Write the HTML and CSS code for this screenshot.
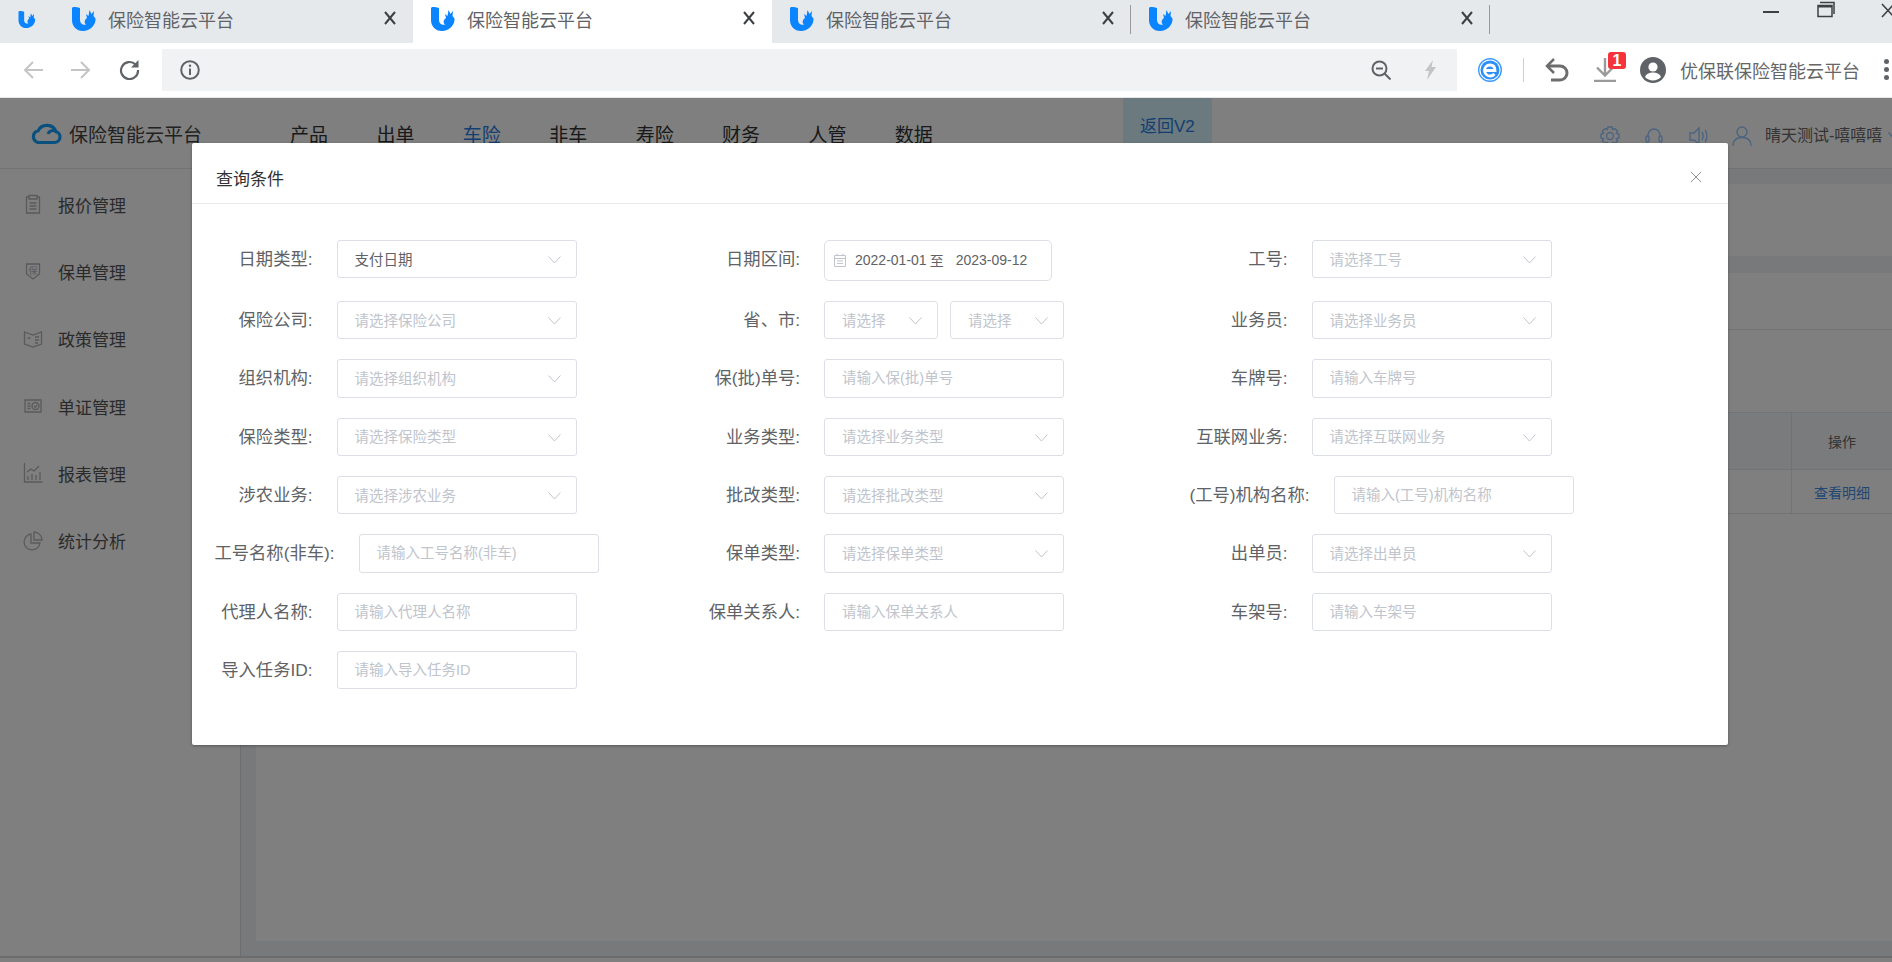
FILE: index.html
```html
<!DOCTYPE html>
<html>
<head>
    <title>保险智能云平台</title>
    <link rel="stylesheet" href="styles.css">
</head>
<body>
    <svg class="defs" width="0" height="0">
        <symbol id="logo" viewBox="0 0 24 24">
            <path d="M1 0C4 0 7 .5 8 1V13C8 16.5 11 18.500 14 17.500 11.500 15.500 13 12 15 11L14 7 16.500 9 17.500 3 19.500 7 22 4 21.500 9 23.500 11.500C24 18 18 24 11 24 4 24 0 19 0 13V1Z"/>
        </symbol>
        <symbol id="chevron" viewBox="0 0 13 8">
            <path d="M.5.5l6 6.500 6-6.500" fill="none" stroke="currentColor"/>
        </symbol>
        <symbol id="close" viewBox="0 0 12 14">
            <path d="M1 1l10 12M11 1L1 13" fill="none" stroke="currentColor" stroke-width="2"/>
        </symbol>
    </svg>

    <div class="tabs">
        <div class="pinned"><svg class="logo-small"><use href="#logo"/></svg></div>
        <div class="tab">
            <svg class="tab-logo"><use href="#logo"/></svg>
            <span class="tab-title">保险智能云平台</span>
            <svg class="tab-close"><use href="#close"/></svg>
        </div>
        <div class="tab active">
            <svg class="tab-logo"><use href="#logo"/></svg>
            <span class="tab-title">保险智能云平台</span>
            <svg class="tab-close"><use href="#close"/></svg>
        </div>
        <div class="tab">
            <svg class="tab-logo"><use href="#logo"/></svg>
            <span class="tab-title">保险智能云平台</span>
            <svg class="tab-close closer"><use href="#close"/></svg>
            <i class="tab-sep"></i>
        </div>
        <div class="tab">
            <svg class="tab-logo"><use href="#logo"/></svg>
            <span class="tab-title">保险智能云平台</span>
            <svg class="tab-close closer"><use href="#close"/></svg>
            <i class="tab-sep"></i>
        </div>
        <div class="win-btns">
            <svg class="win-min" width="16" height="18" viewBox="0 0 16 18"><path d="M0 12h16" stroke="#3c4043" stroke-width="2"/></svg>
            <svg class="win-max" width="18" height="18" viewBox="0 0 18 18"><path d="M3 2.500h14V14M1 5.500h14v11H1z" fill="none" stroke="#3c4043" stroke-width="1.500"/><path d="M1 6.500h14" stroke="#3c4043" stroke-width="2"/></svg>
            <svg class="win-close" width="14" height="18" viewBox="0 0 14 18"><path d="M1 4l12 13M13 4L1 17" fill="none" stroke="#3c4043" stroke-width="1.600"/></svg>
        </div>
    </div>

    <div class="toolbar">
        <svg class="tool-btn" width="20" height="20" viewBox="0 0 20 20"><path d="M20 10H2M10 2l-8 8 8 8" fill="none" stroke="#c4c4c4" stroke-width="2"/></svg>
        <svg class="tool-btn next" width="20" height="20" viewBox="0 0 20 20"><path d="M0 10h18M10 2l8 8-8 8" fill="none" stroke="#c4c4c4" stroke-width="2"/></svg>
        <svg class="tool-btn next" width="21" height="21" viewBox="0 0 21 21"><path d="M16.500 5.500A8.500 8.500 0 1 0 19 11" fill="none" stroke="#5f6368" stroke-width="2.200"/><path d="M19.500 1v7.500H12z" fill="#5f6368"/></svg>
        <div class="address">
            <svg width="20" height="20" viewBox="0 0 20 20"><circle cx="10" cy="10" r="8.800" fill="none" stroke="#5f6368" stroke-width="2"/><path d="M10 8.500V15" stroke="#5f6368" stroke-width="2"/><circle cx="10" cy="5.800" r="1.200" fill="#5f6368"/></svg>
            <svg class="zoom-icon" width="20" height="20" viewBox="0 0 20 20"><circle cx="8.500" cy="8.500" r="7" fill="none" stroke="#5f6368" stroke-width="2"/><path d="M5 8.500h7M13.500 13.500L19.500 19.500" stroke="#5f6368" stroke-width="2"/></svg>
            <svg class="bolt-icon" width="14" height="20" viewBox="0 0 14 20"><path d="M10 0L2 11h4L4 20l9-13H8.500z" fill="#c4c4c4"/></svg>
        </div>
        <svg class="edge-icon" width="24" height="24" viewBox="0 0 24 24">
            <circle cx="12" cy="12" r="11.300" fill="none" stroke="#3d9bff" stroke-width="1.400"/>
            <circle cx="12" cy="12" r="9.500" fill="#2d8ff5"/>
            <path d="M6 12.500h11C17 8.500 14.500 7 12 7 8.500 7 6.500 9.500 6.500 12.500S9 18 12 18c2 0 3.500-.8 4.500-2" fill="none" stroke="#fff" stroke-width="2.800"/>
        </svg>
        <i class="tool-sep"></i>
        <svg class="undo-icon" width="24" height="24" viewBox="0 0 24 24"><path d="M2 8h13a7 7 0 0 1 0 14H6" fill="none" stroke="#6d6d6d" stroke-width="3"/><path d="M9 1L2 8l7 7" fill="none" stroke="#6d6d6d" stroke-width="2.500"/></svg>
        <div class="download">
            <svg width="22" height="24" viewBox="0 0 22 24"><path d="M11 0v17M3 9.500l8 8 8-8M0 23h22" fill="none" stroke="#9a9a9a" stroke-width="2.400"/></svg>
            <span class="badge">1</span>
        </div>
        <svg class="avatar" width="26" height="26" viewBox="0 0 26 26"><circle cx="13" cy="13" r="13" fill="#5f6368"/><circle cx="13" cy="10" r="4.600" fill="#fff"/><path d="M5 20c1.500-3.500 5-4.500 8-4.500s6.500 1 8 4.500c-2 2.300-5 3.500-8 3.500s-6-1.200-8-3.500z" fill="#fff"/></svg>
        <span class="profile">优保联保险智能云平台</span>
        <div class="menu-dots"><i></i><i></i><i></i></div>
    </div>

    <div class="page">
        <div class="app-header">
            <svg class="cloud" width="32" height="24" viewBox="0 0 32 24"><path d="M8 21.500h16.500a5.500 5.500 0 0 0 1.500-10.800A9.500 9 0 0 0 8.200 9.800 6 6 0 0 0 8 21.500zM18 13a5 5 0 0 1 8-2.300" fill="none" stroke="#14a0ff" stroke-width="3.200"/></svg>
            <span class="app-title">保险智能云平台</span>
            <div class="nav">
                <a>产品</a><a>出单</a><a class="current">车险</a><a>非车</a><a>寿险</a><a>财务</a><a>人管</a><a>数据</a>
            </div>
            <div class="back-v2">返回V2</div>
            <div class="user-area">
                <svg width="20" height="20" viewBox="0 0 20 20"><path d="M8 1h4l.6 2.500 2.300-1 2.700 2.700-1.200 2.200 2.600.7v3.800l-2.600.7 1.200 2.200-2.700 2.700-2.300-1L12 19H8l-.6-2.500-2.300 1-2.700-2.700 1.200-2.200L1 11.900V8.100l2.600-.7-1.200-2.200 2.700-2.700 2.300 1z" fill="none"/><circle cx="10" cy="10" r="3.500" fill="none"/></svg>
                <svg width="20" height="20" viewBox="0 0 20 20"><path d="M4 11V9a6 6 0 0 1 12 0v2" fill="none"/><rect x="2" y="10" width="3" height="6" rx="1.500" fill="none"/><rect x="15" y="10" width="3" height="6" rx="1.500" fill="none"/></svg>
                <svg width="20" height="20" viewBox="0 0 20 20"><path d="M2 7h4l5-5v16l-5-4H2zM14 6c1.500 2 1.500 6 0 8M17 4c2.500 3 2.500 9 0 12" fill="none"/></svg>
                <svg width="20" height="20" viewBox="0 0 20 20"><circle cx="10" cy="6" r="5" fill="none"/><path d="M1 20c0-6 4-8.500 9-8.500s9 2.500 9 8.500" fill="none"/></svg>
                <span class="user-name">晴天测试-嘻嘻嘻</span>
                <svg class="user-caret"><use href="#chevron"/></svg>
            </div>
        </div>

        <div class="app-body">
            <div class="sidebar">
                <div class="side-item">
                    <svg width="20" height="20" viewBox="0 0 20 20"><path d="M6 3H3.500v16h13V3H14M6 1.500h8V5H6zM6.500 9h7M6.500 12h7M6.500 15h7" fill="none"/></svg>
                    <span>报价管理</span>
                </div>
                <div class="side-item">
                    <svg width="20" height="20" viewBox="0 0 20 20"><path d="M3.500 3h13v10L10 18l-6.500-5z" fill="none"/><text x="10" y="12.500" class="shield-text">保</text></svg>
                    <span>保单管理</span>
                </div>
                <div class="side-item">
                    <svg width="20" height="20" viewBox="0 0 20 20"><path d="M1.500 3L10 6l8.500-3v12L10 18l-8.500-3zM12 8h4M12 11h4M12 14h3M4.500 9h3" fill="none"/></svg>
                    <span>政策管理</span>
                </div>
                <div class="side-item">
                    <svg width="20" height="20" viewBox="0 0 20 20"><path d="M2 4h16v12H2zM4.500 7.500h3M4.500 10h3M4.500 12.500h3" fill="none"/><circle cx="12.500" cy="10" r="3.500" fill="none"/><path d="M11 10l1.200 1.300 2-2.400" fill="none"/></svg>
                    <span>单证管理</span>
                </div>
                <div class="side-item">
                    <svg width="20" height="20" viewBox="0 0 20 20"><path d="M1.500 0v19h18M5 17v-4M9 17v-6M13 17v-5M17 17V9M4 9l4-3 3 2 5-5" fill="none"/></svg>
                    <span>报表管理</span>
                </div>
                <div class="side-item">
                    <svg width="20" height="20" viewBox="0 0 20 20"><path d="M8 3a8 8 0 1 0 9 9H8zM11 1v8h8a8 8 0 0 0-8-8z" fill="none"/></svg>
                    <span>统计分析</span>
                </div>
            </div>

            <div class="main">
                <div class="card-top"></div>
                <div class="card-list">
                    <div class="card-tools"><div class="tools-line"></div></div>
                    <div class="table-row head"><div class="cell-op">操作</div></div>
                    <div class="table-row"><div class="cell-op link">查看明细</div></div>
                </div>
            </div>
        </div>
        <div class="app-footer"></div>

        <div class="overlay">
            <div class="modal">
                <div class="modal-header">
                    <span class="modal-title">查询条件</span>
                    <svg class="modal-close" width="12" height="12" viewBox="0 0 12 12"><path d="M1 1l10 10M11 1L1 11" stroke="#909399"/></svg>
                </div>
                <form class="query-form">
                    <div class="field">
                        <label>日期类型:</label>
                        <div class="select value">支付日期<svg><use href="#chevron"/></svg></div>
                    </div>
                    <div class="field">
                        <label>日期区间:</label>
                        <div class="date-range">
                            <svg width="14" height="14" viewBox="0 0 14 14"><path d="M1.500 2.500h11v11h-11zM1.500 5.500h11M4 2.500v-2M10 2.500v-2M4 8h6M4 10.500h6" fill="none" stroke="#c0c4cc"/></svg>
                            <span class="date-from">2022-01-01</span><span class="date-to">至</span><span class="date-end">2023-09-12</span>
                        </div>
                    </div>
                    <div class="field">
                        <label>工号:</label>
                        <div class="select">请选择工号<svg><use href="#chevron"/></svg></div>
                    </div>

                    <div class="field">
                        <label>保险公司:</label>
                        <div class="select">请选择保险公司<svg><use href="#chevron"/></svg></div>
                    </div>
                    <div class="field">
                        <label>省、市:</label>
                        <div class="select-pair">
                            <div class="select">请选择<svg><use href="#chevron"/></svg></div>
                            <div class="select">请选择<svg><use href="#chevron"/></svg></div>
                        </div>
                    </div>
                    <div class="field">
                        <label>业务员:</label>
                        <div class="select">请选择业务员<svg><use href="#chevron"/></svg></div>
                    </div>

                    <div class="field">
                        <label>组织机构:</label>
                        <div class="select">请选择组织机构<svg><use href="#chevron"/></svg></div>
                    </div>
                    <div class="field">
                        <label>保(批)单号:</label>
                        <input type="text" placeholder="请输入保(批)单号">
                    </div>
                    <div class="field">
                        <label>车牌号:</label>
                        <input type="text" placeholder="请输入车牌号">
                    </div>

                    <div class="field">
                        <label>保险类型:</label>
                        <div class="select">请选择保险类型<svg><use href="#chevron"/></svg></div>
                    </div>
                    <div class="field">
                        <label>业务类型:</label>
                        <div class="select">请选择业务类型<svg><use href="#chevron"/></svg></div>
                    </div>
                    <div class="field">
                        <label>互联网业务:</label>
                        <div class="select">请选择互联网业务<svg><use href="#chevron"/></svg></div>
                    </div>

                    <div class="field">
                        <label>涉农业务:</label>
                        <div class="select">请选择涉农业务<svg><use href="#chevron"/></svg></div>
                    </div>
                    <div class="field">
                        <label>批改类型:</label>
                        <div class="select">请选择批改类型<svg><use href="#chevron"/></svg></div>
                    </div>
                    <div class="field">
                        <label>(工号)机构名称:</label>
                        <input type="text" placeholder="请输入(工号)机构名称">
                    </div>

                    <div class="field">
                        <label>工号名称(非车):</label>
                        <input type="text" placeholder="请输入工号名称(非车)">
                    </div>
                    <div class="field">
                        <label>保单类型:</label>
                        <div class="select">请选择保单类型<svg><use href="#chevron"/></svg></div>
                    </div>
                    <div class="field">
                        <label>出单员:</label>
                        <div class="select">请选择出单员<svg><use href="#chevron"/></svg></div>
                    </div>

                    <div class="field">
                        <label>代理人名称:</label>
                        <input type="text" placeholder="请输入代理人名称">
                    </div>
                    <div class="field">
                        <label>保单关系人:</label>
                        <input type="text" placeholder="请输入保单关系人">
                    </div>
                    <div class="field">
                        <label>车架号:</label>
                        <input type="text" placeholder="请输入车架号">
                    </div>

                    <div class="field">
                        <label>导入任务ID:</label>
                        <input type="text" placeholder="请输入导入任务ID">
                    </div>
                </form>
            </div>
        </div>
    </div>
</body>
</html>
```

FILE: styles.css
```css
* {
    box-sizing: border-box;
}
html, body {
    height: 100%;
}
body {
    margin: 0;
    display: flex;
    flex-direction: column;
    overflow: hidden;
    font-family: "Liberation Sans", "Noto Sans CJK SC", sans-serif;
    background-color: white;
}
.defs {
    position: absolute;
}

/* browser tab strip */
.tabs {
    display: flex;
    height: 43px;
    flex: none;
    background-color: #e6e9ec;
    overflow: hidden;
}
.pinned {
    flex: none;
    width: 54px;
    padding: 11px 0 0 18px;
}
.logo-small {
    display: block;
    width: 18px;
    height: 17px;
    fill: #0a84ff;
}
.tab {
    display: flex;
    align-items: center;
    flex: none;
    width: 359px;
    padding-left: 18px;
    color: #5f6368;
}
.tab.active {
    background-color: white;
}
.tab-logo {
    width: 24px;
    height: 24px;
    margin-top: -5px;
    fill: #0a84ff;
}
.tab-title {
    margin: -5px 0 0 12px;
    font-size: 18px;
}
.tab-close {
    width: 12px;
    height: 14px;
    margin: -7px 17px 0 auto;
    color: #3c4043;
}
.tab-close.closer {
    margin-right: 16px;
}
.tab-sep {
    width: 1px;
    height: 29px;
    margin-top: -5px;
    background-color: #9a9a9a;
}
.win-btns {
    display: flex;
    flex: none;
    align-items: flex-start;
    margin-left: 273px;
}
.win-max {
    margin-left: 38px;
}
.win-close {
    margin-left: 46px;
}

/* browser toolbar */
.toolbar {
    display: flex;
    align-items: center;
    flex: none;
    height: 55px;
    padding: 0 0 1px 23px;
    background-color: white;
    border-bottom: 1px solid #e3e5e8;
}
.tool-btn.next {
    margin-left: 28px;
}
.address {
    display: flex;
    align-items: center;
    width: 1295px;
    height: 42px;
    margin-left: 22px;
    padding: 0 20px 0 18px;
    background-color: #f1f2f4;
}
.zoom-icon {
    margin-left: auto;
}
.bolt-icon {
    margin-left: 32px;
}
.edge-icon {
    margin-left: 21px;
}
.tool-sep {
    width: 1px;
    height: 24px;
    margin-left: 21px;
    background-color: #cfcfcf;
}
.undo-icon {
    margin-left: 21px;
}
.download {
    position: relative;
    width: 22px;
    height: 24px;
    margin-left: 25px;
}
.download svg {
    display: block;
}
.badge {
    position: absolute;
    top: -6px;
    left: 14px;
    width: 18px;
    height: 17px;
    border-radius: 3px;
    background-color: #f4333c;
    color: white;
    font-size: 16px;
    font-weight: bold;
    line-height: 17px;
    text-align: center;
}
.avatar {
    margin-left: 24px;
}
.profile {
    margin-left: 14px;
    color: #666;
    font-size: 18px;
}
.menu-dots {
    display: flex;
    flex-direction: column;
    gap: 3px;
    margin-left: 24px;
}
.menu-dots i {
    width: 5px;
    height: 5px;
    border-radius: 50%;
    background-color: #5f6368;
}

/* the application behind the dialog */
.page {
    position: relative;
    display: flex;
    flex-direction: column;
    flex: 1;
    min-height: 0;
    background-color: white;
}
.app-header {
    display: flex;
    align-items: center;
    flex: none;
    height: 71px;
    padding-left: 30px;
    border-bottom: 1px solid #e4e4e4;
    overflow: hidden;
}
.cloud {
    flex: none;
}
.app-title {
    flex: none;
    margin-left: 7px;
    color: #444;
    font-size: 19px;
    white-space: nowrap;
}
.nav {
    display: flex;
    flex: none;
    gap: 48.400px;
    margin-left: 88px;
    font-size: 19px;
    color: #333;
    white-space: nowrap;
}
.nav .current {
    color: #2b7de0;
}
.back-v2 {
    flex: none;
    align-self: flex-start;
    width: 89px;
    height: 58px;
    margin-left: 190px;
    background-color: #d4f4ff;
    color: #2b7de0;
    font-size: 17px;
    line-height: 58px;
    text-align: center;
}
.user-area {
    display: flex;
    align-items: center;
    flex: none;
    gap: 24px;
    margin: 5px 0 0 388px;
}
.user-area svg {
    flex: none;
    stroke: #98c8ff;
    stroke-width: 1.400;
}
.user-name {
    margin: 0 0 3px -11px;
    color: #666;
    font-size: 16px;
    white-space: nowrap;
}
.user-area .user-caret {
    width: 13px;
    height: 8px;
    margin-left: -18px;
    color: #98c8ff;
}
.app-body {
    display: flex;
    flex: 1;
    min-height: 0;
}
.sidebar {
    flex: none;
    width: 241px;
    padding-top: 1.500px;
    border-right: 1px solid #ddd;
}
.side-item {
    display: flex;
    align-items: center;
    height: 67.300px;
    padding-left: 23px;
    color: #555;
    font-size: 17px;
}
.side-item svg {
    flex: none;
    stroke: #b4b4b4;
    stroke-width: 1.300;
}
.side-item span {
    margin-left: 15px;
}
.shield-text {
    fill: #b4b4b4;
    stroke: none;
    font-size: 9px;
    text-anchor: middle;
}
.main {
    display: flex;
    flex-direction: column;
    flex: 1;
    min-width: 0;
    padding: 15px 0 15px 15px;
    background-color: #f0f2f5;
}
.card-top {
    flex: none;
    height: 72px;
    margin-bottom: 17px;
    background-color: white;
}
.card-list {
    flex: 1;
    background-color: white;
}
.card-tools {
    height: 139px;
}
.tools-line {
    height: 57px;
    border-bottom: 1px solid #e4e4e4;
}
.table-row {
    display: flex;
    justify-content: flex-end;
    height: 44px;
    border-bottom: 1px solid #e4e7ed;
}
.table-row.head {
    height: 58px;
    background-color: #f5f6f8;
    border-top: 1px solid #e4e7ed;
}
.cell-op {
    display: flex;
    align-items: center;
    justify-content: center;
    width: 101px;
    border-left: 1px solid #e4e7ed;
    color: #666;
    font-size: 14px;
}
.cell-op.link {
    color: #3f8fe8;
}
.app-footer {
    flex: none;
    height: 6px;
    border-top: 2px solid #d8d8d8;
}

/* dialog */
.overlay {
    position: absolute;
    top: 0;
    left: 0;
    right: 0;
    bottom: 0;
    padding: 45px 0 0 192px;
    background-color: rgba(0, 0, 0, 0.5);
}
.modal {
    width: 1536px;
    height: 602px;
    border-radius: 2px;
    background-color: white;
    box-shadow: 0 1px 3px rgba(0, 0, 0, 0.3);
}
.modal-header {
    display: flex;
    align-items: center;
    justify-content: space-between;
    height: 61px;
    padding: 9px 26px 0 24px;
    border-bottom: 1px solid #e8eaec;
}
.modal-close {
    margin-top: -1px;
}
.modal-title {
    color: #303133;
    font-size: 17px;
}
.query-form {
    display: grid;
    grid-template-columns: repeat(3, 487.500px);
    row-gap: 20px;
    align-items: start;
    padding: 36px 0 0 22.500px;
}
.field {
    display: flex;
    align-items: flex-start;
}
.field label {
    flex: none;
    min-width: 98px;
    margin-right: 24px;
    color: #606266;
    font-size: 17.300px;
    line-height: 38px;
    text-align: right;
    white-space: nowrap;
}
.select, input {
    width: 240px;
    height: 38.330px;
    border: 1px solid #dcdfe6;
    border-radius: 3px;
    background-color: white;
}
.select {
    display: flex;
    align-items: center;
    justify-content: space-between;
    padding: 0 15px 2px 17px;
    color: #c0c4cc;
    font-size: 14.500px;
}
.select.value {
    color: #606266;
}
.select svg {
    flex: none;
    width: 13px;
    height: 8px;
    margin-top: 4px;
    color: #c0c4cc;
}
input {
    padding: 0 17px;
    font-family: inherit;
    font-size: 14.500px;
}
input::placeholder {
    color: #c0c4cc;
}
.select-pair {
    display: flex;
    gap: 12px;
}
.select-pair .select {
    width: 114px;
}
.date-range {
    display: flex;
    align-items: center;
    width: 228px;
    height: 41px;
    padding: 0 0 2px 8px;
    border: 1px solid #dcdfe6;
    border-radius: 5px;
    color: #606266;
    font-size: 14px;
}
.date-from {
    margin-left: 8px;
}
.date-to {
    margin-left: 3px;
}
.date-end {
    margin-left: 12px;
}
```
